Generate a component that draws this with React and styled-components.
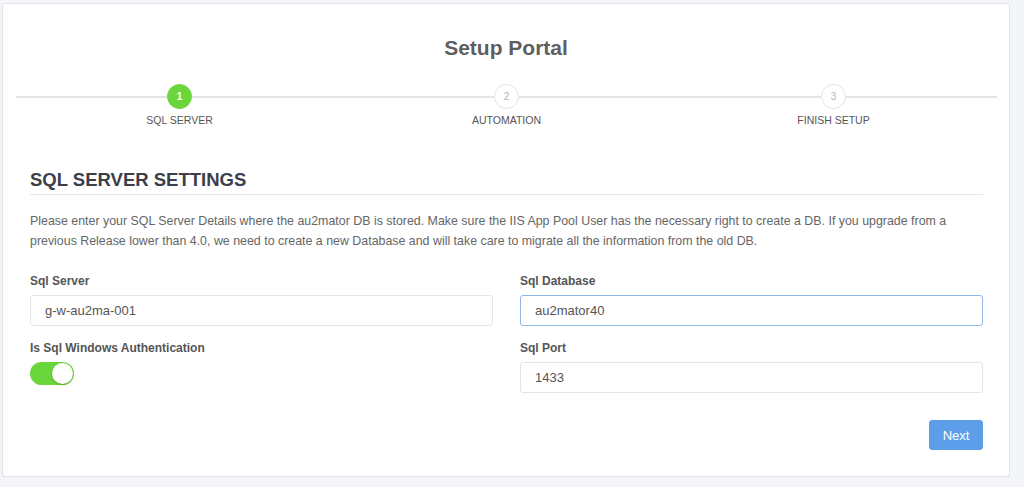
import React from "react";
import styled, { createGlobalStyle } from "styled-components";

const Global = createGlobalStyle`
    html, body {
        margin: 0;
        padding: 0;
        background: #f3f5f9;
        font-family: "Liberation Sans", Arial, sans-serif;
    }
    * { box-sizing: border-box; }
`;

const Card = styled.section`
    width: 1008px;
    margin: 3px 0 0 2px;
    background: #fff;
    border: 1px solid #dfe4e9;
    border-radius: 3px;
    box-shadow: 0 1px 1px #e2e6ea;
    padding: 32px 0 26px;
`;

const Title = styled.h1`
    margin: 0;
    text-align: center;
    font-size: 21px;
    line-height: 24px;
    font-weight: 700;
    color: #5f5f5f;
`;

const Stepper = styled.div`
    display: flex;
    margin: 24px 12px 0 13px;
`;

const Step = styled.div`
    flex: 1;
    display: flex;
    flex-direction: column;
    align-items: center;
`;

const Track = styled.div`
    width: 100%;
    display: flex;
    align-items: center;
`;

const Seg = styled.div`
    flex: 1;
    height: 2px;
    background: #e4e4e4;
`;

const Dot = styled.div`
    width: 25px;
    height: 25px;
    border-radius: 50%;
    display: flex;
    align-items: center;
    justify-content: center;
    font-size: 10px;
    font-weight: ${p => (p.active ? 700 : 400)};
    color: ${p => (p.active ? "#fff" : "#b5b5b5")};
    background: ${p => (p.active ? "#6bd63b" : "#fff")};
    border: 1px solid ${p => (p.active ? "#6bd63b" : "#e4e4e4")};
`;

const StepLabel = styled.div`
    margin-top: 4px;
    font-size: 10.5px;
    line-height: 14px;
    color: #555;
    text-transform: uppercase;
`;

const Form = styled.div`
    padding: 0 26px 0 27px;
    margin-top: 42px;
`;

const Heading = styled.h2`
    margin: 0;
    font-size: 18.5px;
    line-height: 22px;
    font-weight: 700;
    color: #3b3f4c;
    padding-bottom: 3px;
    border-bottom: 1px solid #e6e6e6;
`;

const Intro = styled.p`
    margin: 16px 0 0;
    font-size: 12.4px;
    line-height: 20px;
    color: #666;
`;

const Grid = styled.div`
    display: grid;
    grid-template-columns: 463px 1fr;
    column-gap: 27px;
    row-gap: 14px;
    margin-top: 22px;
`;

const Field = styled.div`
    display: flex;
    flex-direction: column;
    align-items: flex-start;
`;

const Label = styled.label`
    font-size: 12px;
    line-height: 16px;
    font-weight: 700;
    color: #555;
    margin-bottom: 6px;
`;

const Input = styled.input`
    width: 100%;
    height: 31px;
    padding: 0 14px;
    font-family: "Liberation Sans", Arial, sans-serif;
    font-size: 13px;
    color: #555;
    background: #fff;
    border: 1px solid ${p => (p.focused ? "#8fb8e6" : "#e2e6ea")};
    border-radius: 3px;
    outline: none;
    caret-color: #333;
`;

const Switch = styled.div`
    width: 44px;
    height: 23px;
    border-radius: 12px;
    background: ${p => (p.on ? "#6bd63b" : "#ddd")};
    display: flex;
    align-items: center;
    justify-content: ${p => (p.on ? "flex-end" : "flex-start")};
    padding: 1px;
`;

const Knob = styled.div`
    width: 21px;
    height: 21px;
    border-radius: 50%;
    background: #fff;
    box-shadow: 0 1px 2px rgba(0, 0, 0, 0.25);
`;

const Actions = styled.div`
    display: flex;
    justify-content: flex-end;
    margin-top: 27px;
`;

const Button = styled.button`
    height: 30px;
    width: 54px;
    border: 1px solid #5a9de9;
    border-radius: 3px;
    background: #5c9eea;
    color: #fff;
    font-family: "Liberation Sans", Arial, sans-serif;
    font-size: 13px;
    cursor: pointer;
`;

const steps = ["SQL Server", "Automation", "Finish Setup"];

export default function App() {
    return (
        <>
            <Global />
            <Card>
                <Title>Setup Portal</Title>
                <Stepper>
                    {steps.map((s, i) => (
                        <Step key={s}>
                            <Track>
                                <Seg />
                                <Dot active={i === 0}>{i + 1}</Dot>
                                <Seg />
                            </Track>
                            <StepLabel>{s}</StepLabel>
                        </Step>
                    ))}
                </Stepper>
                <Form>
                    <Heading>SQL SERVER SETTINGS</Heading>
                    <Intro>
                        Please enter your SQL Server Details where the au2mator DB is stored. Make sure the IIS App Pool User has the necessary right to create a DB. If you upgrade from a previous Release lower than 4.0, we need to create a new Database and will take care to migrate all the information from the old DB.
                    </Intro>
                    <Grid>
                        <Field>
                            <Label>Sql Server</Label>
                            <Input defaultValue="g-w-au2ma-001" />
                        </Field>
                        <Field>
                            <Label>Sql Database</Label>
                            <Input defaultValue="au2mator40" focused autoFocus />
                        </Field>
                        <Field>
                            <Label>Is Sql Windows Authentication</Label>
                            <Switch on>
                                <Knob />
                            </Switch>
                        </Field>
                        <Field>
                            <Label>Sql Port</Label>
                            <Input defaultValue="1433" />
                        </Field>
                    </Grid>
                    <Actions>
                        <Button>Next</Button>
                    </Actions>
                </Form>
            </Card>
        </>
    );
}
